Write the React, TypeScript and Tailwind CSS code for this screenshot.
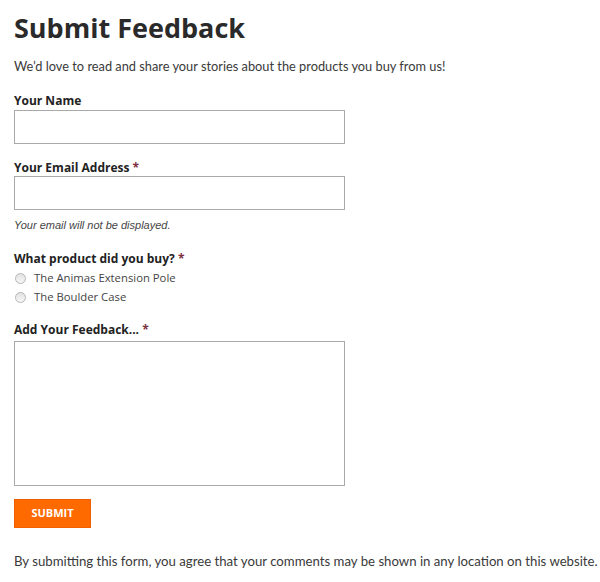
import React from "react";

function Label({ children, req }: { children: React.ReactNode; req?: boolean }) {
  return (
    <div className="text-[12px] font-bold leading-[16px] text-[#222] [font-family:'Open_Sans',sans-serif]">
      {children}
      {req && <span className="text-[#7d2f3f]"> *</span>}
    </div>
  );
}

function Radio({ label }: { label: string }) {
  return (
    <label className="flex items-center h-[19px]">
      <span className="ml-[1px] w-[11px] h-[11px] rounded-full border border-[#b5b5b5] bg-gradient-to-b from-[#e2e2e2] to-[#f7f7f7]" />
      <span className="ml-[8px] text-[11.3px] text-[#444] [font-family:'Open_Sans',sans-serif]">{label}</span>
    </label>
  );
}

export default function App() {
  return (
    <div className="w-[600px] h-[582px] bg-white px-[14px] pt-[8px] [font-family:Lato,sans-serif] text-[#333]">
      <h1 className="text-[27px] font-bold leading-[40px] text-[#2a2a2a] [font-family:'Open_Sans',sans-serif]">
        Submit Feedback
      </h1>
      <p className="mt-[9px] text-[12.8px] leading-[18px] text-[#3a3a3a]">
        We’d love to read and share your stories about the products you buy from us!
      </p>
      <div className="mt-[18px]">
        <Label>Your Name</Label>
        <div className="mt-[1px] w-[331px] h-[34px] border border-[#a9a9a9]" />
      </div>
      <div className="mt-[16px]">
        <Label req>Your Email Address</Label>
        <div className="mt-[0px] w-[331px] h-[34px] border border-[#a9a9a9]" />
        <div className="mt-[7px] text-[11px] italic text-[#444] [font-family:'Liberation_Sans',sans-serif]">
          Your email will not be displayed.
        </div>
      </div>
      <div className="mt-[17px]">
        <Label req>What product did you buy?</Label>
        <div className="mt-[2px]">
          <Radio label="The Animas Extension Pole" />
          <Radio label="The Boulder Case" />
        </div>
      </div>
      <div className="mt-[15px]">
        <Label req>Add Your Feedback...</Label>
        <div className="mt-[3px] w-[331px] h-[145px] border border-[#a9a9a9]" />
      </div>
      <button className="mt-[13px] w-[77px] h-[29px] bg-[#ff6a00] border border-[#f06000] text-white text-[11px] font-bold [font-family:'Open_Sans',sans-serif]">
        SUBMIT
      </button>
      <p className="mt-[24px] text-[13.2px] leading-[18px] text-[#3a3a3a] whitespace-nowrap">
        By submitting this form, you agree that your comments may be shown in any location on this website.
      </p>
    </div>
  );
}
